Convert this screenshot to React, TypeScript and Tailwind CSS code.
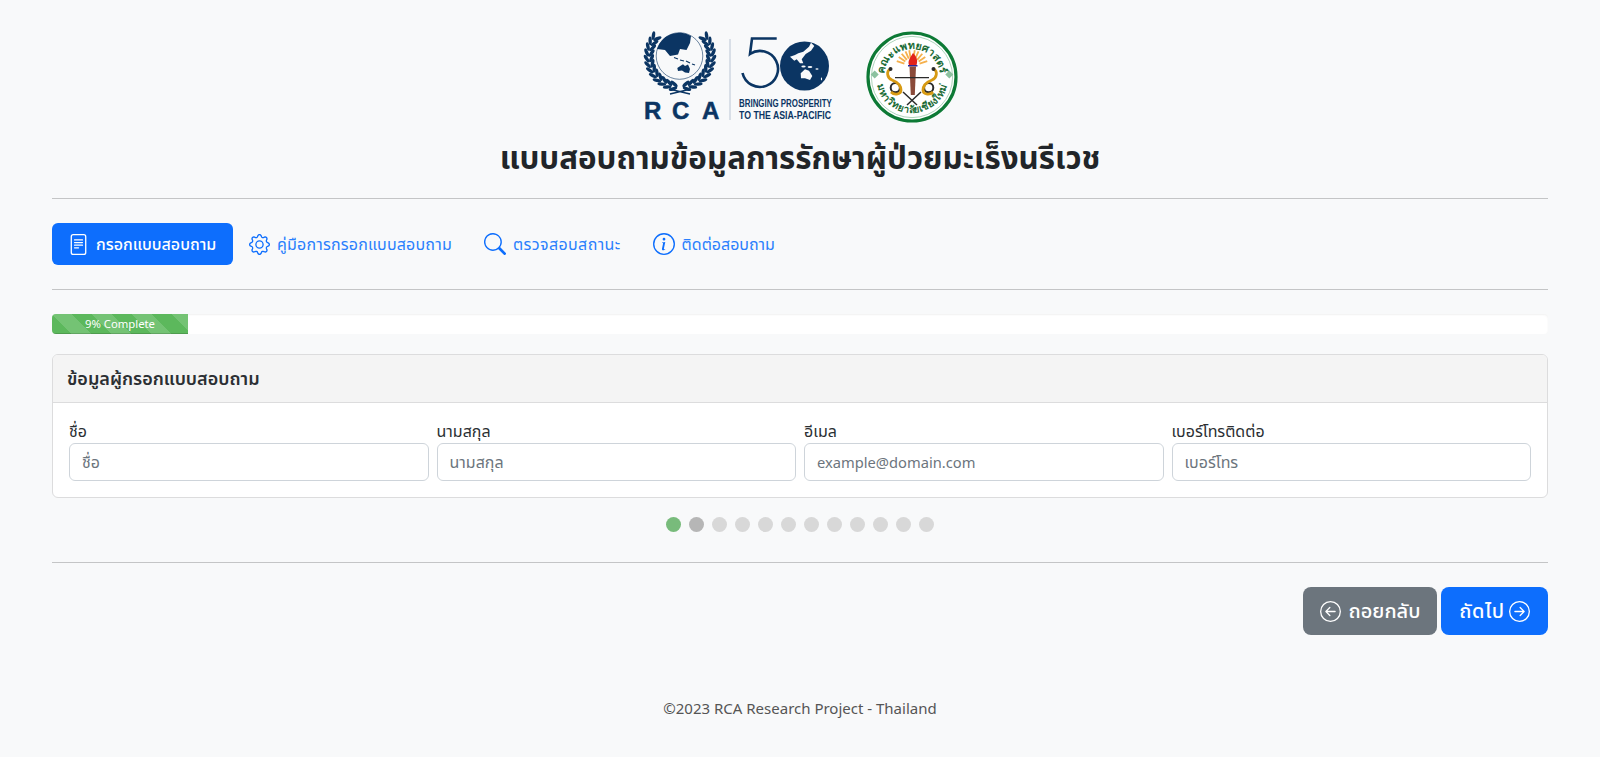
import React from "react";
import {
  BsArrowLeftCircle,
  BsArrowRightCircle,
  BsGear,
  BsInfoCircle,
  BsSearch,
  BsFileText,
} from "react-icons/bs";

const fields = [
  { label: "ชื่อ", placeholder: "ชื่อ", size: "text-[16px]" },
  { label: "นามสกุล", placeholder: "นามสกุล", size: "text-[16px]" },
  { label: "อีเมล", placeholder: "example@domain.com", size: "text-[14.7px]" },
  { label: "เบอร์โทรติดต่อ", placeholder: "เบอร์โทร", size: "text-[16px]" },
];

const navy = "#0b3563";

// leaves of the left half of the wreath, walking up from the bottom stem
const makeLeaves = () => {
  const out: { x: number; y: number; r: number }[] = [];
  for (let deg = 12; deg <= 128; deg += 10.5) {
    const t = (deg * Math.PI) / 180;
    const tx = -Math.cos(t);
    const ty = -Math.sin(t);
    const nx = -Math.sin(t);
    const ny = Math.cos(t);
    [
      { R: 33.5, s: 0.55 },
      { R: 28.5, s: -0.55 },
    ].forEach(({ R, s }) => {
      const dx = tx + nx * s;
      const dy = ty + ny * s;
      out.push({
        x: 38 + nx * R,
        y: 27 + ny * R,
        r: (Math.atan2(dy, dx) * 180) / Math.PI,
      });
    });
  }
  return out;
};
const leaves = makeLeaves();

const RcaLogo = () => (
  <svg width="192" height="98" viewBox="0 0 192 98">
    <circle cx="37.5" cy="27" r="23.3" fill="none" stroke={navy} strokeWidth="0.6" />
    <path d="M15 20 A23.3 23.3 0 0 1 49 7 L48 14 L44.5 21 L38 20 L36 25.5 L28 27 L23 21 Z" fill={navy} />
    <path d="M35.3 39 L39 36.5 L41 35.3 L43 37 L46 35.5 L48 40 L47 44 L43 43.5 L40 41.5 L36 42 Z" fill={navy} />
    <path d="M32 28.5 L36 30 M38 31 L42 32 M44 32 L48 34 M50 35 L53 36" stroke={navy} strokeWidth="1.2" />
    {leaves.map((l, i) => (
      <ellipse key={i} cx={l.x} cy={l.y} rx="4.4" ry="1.7" fill={navy} transform={`rotate(${l.r} ${l.x} ${l.y})`} />
    ))}
    <g transform="translate(76 0) scale(-1 1)">
      {leaves.map((l, i) => (
        <ellipse key={i} cx={l.x} cy={l.y} rx="4.4" ry="1.7" fill={navy} transform={`rotate(${l.r} ${l.x} ${l.y})`} />
      ))}
    </g>
    <path d="M27 60 L48 65 M49 60 L28 65" stroke={navy} strokeWidth="1.3" />
    <g fill={navy} stroke={navy} strokeWidth="0.5" fontFamily="Liberation Sans, sans-serif" fontSize="24" fontWeight="700">
      <text x="2" y="90">R</text>
      <text x="30" y="90">C</text>
      <text x="60" y="90">A</text>
    </g>
    <rect x="87.5" y="10" width="1" height="81" fill="#b9c6d4" />
    <path d="M134.7 9.5 H110 L108 25 A18 18 0 1 1 100.5 44" fill="none" stroke={navy} strokeWidth="2.6" />
    <circle cx="162.5" cy="37" r="24.5" fill={navy} />
    <path d="M148 27.7 L152.3 31.7 L154.7 30.3 L158 34.3 L161.3 34.3 L159.7 30.3 L163.7 25 L169 21.7 L172.3 17 L169 13.7 L167 17.7 L161.3 22.7 L156.3 24.3 L153 26 Z" fill="#f8f9fa" />
    <path d="M158.7 44.3 L163 40.3 L167 41.7 L170.3 47 L168 51 L163 49.3 L159 49.3 Z" fill="#f8f9fa" />
    <ellipse cx="161.5" cy="37.5" rx="2.2" ry="0.9" fill="#f8f9fa" />
    <ellipse cx="168" cy="38" rx="2.4" ry="1" fill="#f8f9fa" />
    <ellipse cx="175" cy="40" rx="1.6" ry="0.7" fill="#f8f9fa" />
    <ellipse cx="179.5" cy="50" rx="0.6" ry="1.4" fill="#f8f9fa" />
    <g fill={navy} fontFamily="Liberation Sans, sans-serif" fontSize="11" fontWeight="700">
      <text transform="translate(97 78.3) scale(0.72 1)">BRINGING PROSPERITY</text>
      <text transform="translate(97 90.3) scale(0.795 1)">TO THE ASIA-PACIFIC</text>
    </g>
  </svg>
);

const SealLogo = () => (
  <svg width="92" height="94" viewBox="0 0 92 94" className="mt-px">
    <defs>
      <path id="sealTop" d="M18 47 A28 28 0 0 1 74 47" />
      <path id="sealBottom" d="M10 47 A36 36 0 0 0 82 47" />
    </defs>
    <circle cx="46" cy="47" r="44" fill="#fff" stroke="#0d7a35" strokeWidth="3.2" />
    <circle cx="46" cy="47" r="40.6" fill="none" stroke="#5aa877" strokeWidth="0.5" />
    <g fill="#1a6b35" fontFamily="Noto Sans, sans-serif" fontWeight="700">
      <text fontSize="10.5">
        <textPath href="#sealTop" startOffset="50%" textAnchor="middle">คณะแพทยศาสตร์</textPath>
      </text>
      <text fontSize="10">
        <textPath href="#sealBottom" startOffset="50%" textAnchor="middle">มหาวิทยาลัยเชียงใหม่</textPath>
      </text>
    </g>
    <path d="M8.7 40.5 L12.7 44.5 L8.7 48.5 L4.7 44.5 Z M83.3 40.5 L87.3 44.5 L83.3 48.5 L79.3 44.5 Z" fill="#8cc29f" />
    {[-72, -56, -40, -24, -10, 10, 24, 40, 56, 72].map((a) => (
      <path key={a} d="M46 28 L46 20" stroke="#f5b04c" strokeWidth="1.8" transform={`rotate(${a} 46 36)`} />
    ))}
    <path d="M47 23 C51 27 52 31 50.5 35 H43 C41.5 31 44 28 47 23 Z" fill="#e2231a" />
    <rect x="42" y="35" width="9.5" height="1.5" fill="#2a2a9a" />
    <path d="M43.5 36.5 H50 L48.8 65 H44.8 Z" fill="#8a4a3a" />
    <path d="M29 47.7 H63" stroke="#2b2b2b" strokeWidth="1.3" />
    <circle cx="29.3" cy="57.7" r="4.6" fill="none" stroke="#2b2b2b" strokeWidth="2" />
    <circle cx="62.7" cy="57.7" r="4.6" fill="none" stroke="#2b2b2b" strokeWidth="2" />
    <path d="M24.5 39 C20 41 21 48 26 50 C31 52 35 55 35 60 C35 64 29 66 25 62" fill="none" stroke="#d79a13" strokeWidth="2.8" />
    <path d="M67.5 39 C72 41 71 48 66 50 C61 52 57 55 57 60 C57 64 63 66 67 62" fill="none" stroke="#d79a13" strokeWidth="2.8" />
    <circle cx="24.5" cy="39" r="2" fill="#2b2b2b" />
    <circle cx="67.5" cy="39" r="2" fill="#2b2b2b" />
    <path d="M37 62 L51 75 M55 62 L41 75" stroke="#2b2b2b" strokeWidth="1.5" />
  </svg>
);

const NavLink = ({ icon, label, className }: { icon: React.ReactNode; label: string; className: string }) => (
  <a className={`flex h-[42px] items-center gap-[7px] rounded-md px-4 ${className}`}>
    {icon}
    {label}
  </a>
);

export default function App() {
  return (
    <div className="min-h-[757px] bg-[#f8f9fa] px-[52px] pt-[29px] font-['Noto_Sans','Noto_Sans_Thai',sans-serif] text-[16px] text-[#2b2f33]">
      <div className="flex h-[96px] items-start justify-center gap-[32px]">
        <RcaLogo />
        <SealLogo />
      </div>
      <h1 className="mt-[13px] text-center text-[31.3px] leading-[38px] font-bold text-[#212529]">
        แบบสอบถามข้อมูลการรักษาผู้ป่วยมะเร็งนรีเวช
      </h1>
      <hr className="mt-[22px] border-[#c4c5c6]" />

      <nav className="mt-[24px] flex">
        <NavLink
          className="w-[181px] bg-[#0d6efd] font-medium text-white"
          icon={<BsFileText size={21} />}
          label="กรอกแบบสอบถาม"
        />
        <NavLink
          className="text-[#2a7ffd] tracking-[0.2px]"
          icon={<BsGear size={21} className="text-[#0d6efd]" />}
          label="คู่มือการกรอกแบบสอบถาม"
        />
        <NavLink
          className="text-[#2a7ffd] tracking-[0.4px]"
          icon={<BsSearch size={22} className="text-[#0d6efd]" />}
          label="ตรวจสอบสถานะ"
        />
        <NavLink
          className="text-[#2a7ffd]"
          icon={<BsInfoCircle size={22} className="text-[#0d6efd]" />}
          label="ติดต่อสอบถาม"
        />
      </nav>
      <hr className="mt-[24px] border-[#c4c5c6]" />

      <div className="mt-[24px] h-[20px] overflow-hidden rounded bg-white shadow-[inset_0_1px_2px_rgba(0,0,0,.06)]">
        <div className="h-full w-[136px] bg-[#5cb85c] bg-[linear-gradient(45deg,rgba(255,255,255,.15)_25%,transparent_25%,transparent_50%,rgba(255,255,255,.15)_50%,rgba(255,255,255,.15)_75%,transparent_75%,transparent)] bg-[length:40px_40px] text-center text-[11.3px] leading-[20px] text-white shadow-[inset_0_-1px_0_rgba(0,0,0,.15)]">
          9% Complete
        </div>
      </div>

      <section className="mt-[20px] overflow-hidden rounded-md border border-[#dcdcdd] bg-white">
        <div className="flex h-[48px] items-center border-b border-[#dcdcdd] bg-[#f4f4f4] px-[14px] text-[18px] font-semibold">
          ข้อมูลผู้กรอกแบบสอบถาม
        </div>
        <div className="grid grid-cols-4 gap-2 p-4">
          {fields.map((f) => (
            <label key={f.label} className="block">
              <span className="block h-[24px] leading-[24px]">{f.label}</span>
              <input
                placeholder={f.placeholder}
                className={`block h-[38px] w-full rounded-md border border-[#ced4da] bg-white px-3 placeholder:text-[#6c757d] ${f.size}`}
              />
            </label>
          ))}
        </div>
      </section>

      <div className="mt-[19px] flex justify-center gap-2">
        {Array.from({ length: 12 }).map((_, i) => (
          <span
            key={i}
            className={
              i === 0
                ? "size-[15px] rounded-full bg-[#78bb7b]"
                : i === 1
                  ? "size-[15px] rounded-full bg-[#b6b6b6]"
                  : "size-[15px] rounded-full bg-[#d8d8d8]"
            }
          />
        ))}
      </div>
      <hr className="mt-[30px] border-[#c4c5c6]" />

      <div className="mt-[24px] flex justify-end gap-1">
        <button className="flex h-[48px] w-[134px] items-center justify-center gap-2 rounded-lg bg-[#6c757d] text-[20px] font-medium text-white">
          <BsArrowLeftCircle size={21} />
          ถอยกลับ
        </button>
        <button className="flex h-[48px] w-[107px] items-center justify-center gap-1 rounded-lg bg-[#0d6efd] text-[20px] font-medium tracking-[0.6px] text-white">
          ถัดไป
          <BsArrowRightCircle size={21} />
        </button>
      </div>

      <footer className="mt-[62px] text-center text-[15px] text-[#555]">©2023 RCA Research Project - Thailand</footer>
    </div>
  );
}
